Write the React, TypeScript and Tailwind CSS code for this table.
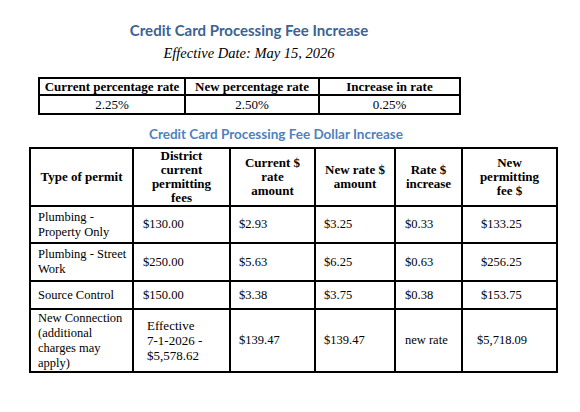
const serif = { fontFamily: '"Liberation Serif", "Times New Roman", serif' };

const rates = [
  ["Current percentage rate", "New percentage rate", "Increase in rate"],
  ["2.25%", "2.50%", "0.25%"],
];

const heads = [
  "Type of permit",
  "District current permitting fees",
  "Current $ rate amount",
  "New rate $ amount",
  "Rate $ increase",
  "New permitting fee $",
];

const rows = [
  { h: "h-[37px]", cells: ["Plumbing - Property Only", "$130.00", "$2.93", "$3.25", "$0.33", "$133.25"] },
  { h: "h-[38px]", cells: ["Plumbing - Street Work", "$250.00", "$5.63", "$6.25", "$0.63", "$256.25"] },
  { h: "h-[28px]", cells: ["Source Control", "$150.00", "$3.38", "$3.75", "$0.38", "$153.75"] },
  {
    h: "h-[63px]",
    cells: ["New Connection (additional charges may apply)", "", "$139.47", "$139.47", "new rate", "$5,718.09"],
  },
];

const widths = ["w-[103px]", "w-[97px]", "w-[85px]", "w-[80px]", "w-[67px]", "w-[95px]"];
const pads = ["pl-[7px] pr-1", "pl-[9px]", "pl-[8px]", "pl-[8px]", "pl-[9px]", "pl-[18px]"];

export default function App() {
  return (
    <div className="w-[580px] h-[412px] bg-white text-black overflow-hidden">
      <div className="w-[498px] pt-[20px] flex flex-col items-center">
        <h1 className="text-[15px] font-bold text-[#3a6396] leading-[20px]" style={{ fontFamily: "Lato, sans-serif" }}>
          Credit Card Processing Fee Increase
        </h1>
        <p className="mt-[4px] text-[14.5px] italic leading-[18px]" style={serif}>
          Effective Date: May 15, 2026
        </p>
      </div>

      <table className="ml-[38px] mt-[15px] border-collapse text-[13px] leading-[15px]" style={serif}>
        <tbody>
          <tr className="h-[16px]">
            {rates[0].map((t, i) => (
              <th key={t} className={`border-2 border-black font-bold text-center ${["w-[146px]", "w-[134px]", "w-[141px]"][i]}`}>
                {t}
              </th>
            ))}
          </tr>
          <tr className="h-[19px]">
            {rates[1].map((t) => (
              <td key={t} className="border-2 border-black text-center">
                {t}
              </td>
            ))}
          </tr>
        </tbody>
      </table>

      <h2
        className="w-[552px] mt-[10px] text-center text-[13.5px] font-bold text-[#4f81bd] leading-[18px]"
        style={{ fontFamily: "Lato, sans-serif" }}
      >
        Credit Card Processing Fee Dollar Increase
      </h2>

      <table className="ml-[29px] mt-[4px] border-collapse" style={serif}>
        <tbody>
          <tr className="h-[58px]">
            {heads.map((t, i) => (
              <th key={t} className={`border-2 border-black font-bold text-center text-[13px] leading-[14px] px-[8px] ${widths[i]}`}>
                {t}
              </th>
            ))}
          </tr>
          {rows.map((r, ri) => (
            <tr key={ri} className={r.h}>
              {r.cells.map((c, i) =>
                ri === 3 && i === 1 ? (
                  <td key={i} className="border-2 border-black text-[13px] leading-[15px] pl-[13px]">
                    Effective
                    <br />
                    7-1-2026 -
                    <br />
                    $5,578.62
                  </td>
                ) : (
                  <td
                    key={i}
                    className={`border-2 border-black text-[12.5px] leading-[15px] align-middle ${
                      ri === 3 && i === 5 ? "pl-[14px]" : pads[i]
                    }`}
                  >
                    {c}
                  </td>
                )
              )}
            </tr>
          ))}
        </tbody>
      </table>
    </div>
  );
}
